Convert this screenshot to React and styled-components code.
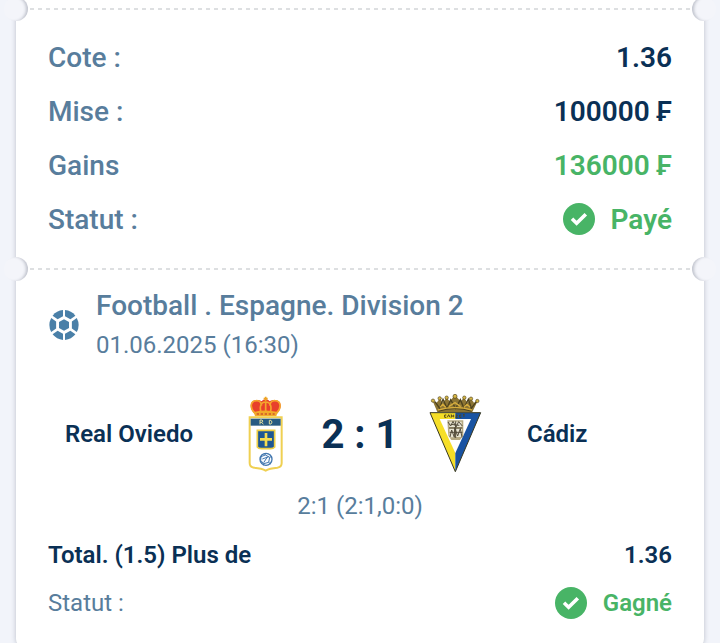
import styled, { createGlobalStyle } from 'styled-components';
import React from 'react';

const GlobalStyle = createGlobalStyle`
  * {
    box-sizing: border-box;
  }

  body {
    margin: 0;
    background: #f2f4fa;
    font-family: Roboto, 'Liberation Sans', sans-serif;
    color: #0a3055;
    overflow-x: hidden;
  }
`;

const Page = styled.main`
  padding: 0 16px;
`;

const Ticket = styled.article`
  background: white;
  border-radius: 0 0 8px 8px;
  box-shadow: 0 0 5px rgba(60, 70, 90, 0.3);
`;

const Tear = styled.div`
  position: relative;
  display: flex;
  align-items: center;
  height: 18px;
  padding: 0 14px;
`;

const Dashes = styled.svg`
  width: 100%;
  height: 2px;
`;

// half circles cut out of both edges of the ticket
const Notch = styled.span`
  position: absolute;
  top: -3px;
  ${({ side }) => side}: -12px;
  width: 24px;
  height: 24px;
  border-radius: 50%;
  background: #f4f5fa;
  box-shadow: inset ${({ side }) => (side === 'left' ? '-3px' : '3px')} 0 3px -1px rgba(60, 70, 90, 0.28);
`;

const Summary = styled.dl`
  margin: 0;
  padding: 12px 32px 14px;
`;

const Row = styled.div`
  display: flex;
  align-items: center;
  justify-content: space-between;
  height: ${({ small }) => (small ? '48px' : '54px')};
  font-size: ${({ small }) => (small ? '24px' : '28px')};
`;

const Label = styled.dt`
  color: ${({ dark }) => (dark ? '#0a3055' : '#587d9c')};
  font-weight: ${({ weight }) => weight || 500};
`;

const Value = styled.dd`
  display: flex;
  align-items: center;
  gap: 16px;
  margin: 0;
  font-weight: 600;
  color: ${({ green }) => (green ? '#48b466' : '#0a3055')};
`;

const Event = styled.section`
  padding: 8px 32px 20px;
`;

const League = styled.header`
  display: flex;
  align-items: center;
  gap: 16px;
  color: #587d9c;
`;

const LeagueName = styled.h2`
  margin: 0;
  font-size: 28px;
  line-height: 40px;
  font-weight: 500;
`;

const Kickoff = styled.time`
  display: block;
  font-size: 24px;
  line-height: 38px;
`;

const Match = styled.div`
  display: grid;
  grid-template-columns: 1fr 80px 110px 80px 1fr;
  align-items: center;
  justify-items: center;
  margin-top: 30px;
`;

const Team = styled.span`
  justify-self: ${({ away }) => (away ? 'start' : 'end')};
  padding: ${({ away }) => (away ? '0 0 0 32px' : '0 32px 0 0')};
  font-size: 24px;
  font-weight: 600;
  white-space: nowrap;
`;

const Score = styled.strong`
  font-size: 40px;
  font-weight: 700;
`;

const Periods = styled.p`
  margin: 12px 0 5px;
  font-size: 24px;
  line-height: 40px;
  text-align: center;
  color: #587d9c;
`;

const Bet = styled.dl`
  margin: 0;
`;

function Check() {
  return (
    <svg width="32" height="32" viewBox="0 0 32 32" aria-hidden="true">
      <circle cx="16" cy="16" r="16" fill="#48b466" />
      <path d="M9 15.8l4.6 4.4 9.2-9" fill="none" stroke="white" strokeWidth="3.6" />
    </svg>
  );
}

function BallIcon() {
  return (
    <svg width="32" height="32" viewBox="0 0 32 32" fill="#4a80a8" aria-hidden="true">
      <path d="M16 10.2l5 2.9v5.8l-5 2.9-5-2.9v-5.8z" />
      <path d="M15 1.1v6.2l-5.4 3-5-3.6A15 15 0 0 1 15 1.1z" />
      <path d="M17 1.1v6.2l5.4 3 5-3.6A15 15 0 0 0 17 1.1z" />
      <path d="M15 30.9v-6.2l-5.4-3-5 3.6A15 15 0 0 0 15 30.9z" />
      <path d="M17 30.9v-6.2l5.4-3 5 3.6A15 15 0 0 1 17 30.9z" />
      <path d="M3.2 9l4.9 3.5v7L3.2 23a15 15 0 0 1 0-14z" />
      <path d="M28.8 9l-4.9 3.5v7l4.9 3.5a15 15 0 0 0 0-14z" />
    </svg>
  );
}

function OviedoCrest() {
  return (
    <svg width="60" height="80" viewBox="2 22 180 240" role="img" aria-label="Real Oviedo">
      {/* crown */}
      <path d="M62 82C44 66 44 42 66 40c8-1 12 1 16 4 5-8 19-8 24 0 4-3 8-5 16-4 22 2 22 26 4 42z" fill="#e8402c" />
      <path d="M62 80c-16-15-15-37 4-38 10-1 15 8 16 15M126 80c16-15 15-37-4-38-10-1-15 8-16 15M80 77c-4-14-3-31 14-31s18 17 14 31M94 46v30" fill="none" stroke="#f4a52c" strokeWidth="5" />
      <path d="M94 30v13M88 36h12" stroke="#eda421" strokeWidth="5" />
      <path d="M58 76q36-9 72 0l-4 13H62z" fill="#f2ab29" />
      <path d="M67 82h54" stroke="#cf572a" strokeWidth="4" strokeDasharray="7 5" />
      {/* shield */}
      <path d="M46 92h96v137c0 9-4 13-13 14-14 1-26 3-35 9-9-6-21-8-35-9-9-1-13-5-13-14z" fill="white" stroke="#efd052" strokeWidth="6" />
      <path d="M49 96h90v21H49z" fill="#285b82" />
      <path d="M77 113v-13h6q5 3 0 7h-6m5 0l5 6M105 101h5q6 5 0 11h-5z" fill="none" stroke="#dfdc9f" strokeWidth="3" />
      <path d="M69 131h52v50q-4 5-12 5H81q-9 0-12-5z" fill="#1e5793" stroke="#edce45" strokeWidth="5" />
      <path d="M95 139v40M77 158h36" stroke="#f5dc50" strokeWidth="8" />
      <circle cx="95" cy="218" r="18" fill="#f8fbff" stroke="#4277ae" strokeWidth="4" />
      <path d="M80 210l13-5 13 7-3 15-15 4-9-10zM93 205l-3-6M106 212l7-3M103 227l6 5M88 231l-1 5M84 217l19-7M88 228l11-17" fill="none" stroke="#4277ae" strokeWidth="3" />
    </svg>
  );
}

function CadizCrest() {
  return (
    <svg width="60" height="80" viewBox="15 22 180 240" role="img" aria-label="Cádiz">
      {/* crown */}
      <path d="M52 76L38 43l12 5 10-13 8 13 12-15 9 11 16-18 17 18 10-11 11 15 9-13 10 13 11-5-16 33z" fill="#8c7534" />
      <path d="M45 45l14 20 10-27 12 27 11-26 15 27 14-27 11 26 13-27 9 27 15-20M55 73q50-16 100 0" fill="none" stroke="#4d421d" strokeWidth="4" />
      <path d="M54 70q52-15 102 0M60 62l8-9 9 9M86 60l19-12 17 12M132 62l9-9 9 9" fill="none" stroke="#d6ad3d" strokeWidth="4" />
      <g fill="#d8b743" stroke="#51451f" strokeWidth="2">
        <circle cx="39" cy="42" r="5" /><circle cx="59" cy="35" r="5" />
        <circle cx="80" cy="33" r="5" /><circle cx="105" cy="29" r="6" />
        <circle cx="133" cy="33" r="5" /><circle cx="153" cy="36" r="5" />
        <circle cx="172" cy="43" r="5" />
      </g>
      {/* pennant */}
      <path d="M30 78h76v177z" fill="#f6df28" />
      <path d="M182 78h-76v177z" fill="#1953a2" />
      <path d="M59 97h94l-47 102z" fill="white" />
      <path d="M82 101h48v46l-10 13h-26l-9-13z" fill="#b6aa83" />
      <path d="M88 105h37v16H88zM88 126h17v26H89zM108 126h18v25h-18z" fill="#e8e4d2" />
      <path d="M84 106l8 12 7-14 9 17 8-16 11 13M87 124h40M90 151l5-21 8 22 1-29 9 25 8-22 5 26M89 137h38M92 113l26 3M107 104v50" fill="none" stroke="#534c3b" strokeWidth="3" />
      <path d="M79 85h-5v7h5M82 92l4-8 4 8M94 84v8q7-3 0-8M101 84v8M107 85h5l-5 7h6M124 85h-5v7h5M129 84h5M129 88h5" fill="none" stroke="#51451b" strokeWidth="3" />
      <path d="M30 78h152l-76 177z" fill="none" stroke="#383820" strokeWidth="3" />
    </svg>
  );
}

function TearLine() {
  return (
    <Tear>
      <Notch side="left" />
      <Dashes aria-hidden="true">
        <line x1="0" y1="1" x2="100%" y2="1" stroke="#dddfe1" strokeWidth="2" strokeDasharray="4 4" />
      </Dashes>
      <Notch side="right" />
    </Tear>
  );
}

function App() {
  return (
    <Page>
      <GlobalStyle />
      <Ticket>
        <TearLine />

        <Summary>
          <Row>
            <Label>Cote :</Label>
            <Value>1.36</Value>
          </Row>
          <Row>
            <Label>Mise :</Label>
            <Value>100000 ₣</Value>
          </Row>
          <Row>
            <Label>Gains</Label>
            <Value green>136000 ₣</Value>
          </Row>
          <Row>
            <Label>Statut :</Label>
            <Value green><Check />Payé</Value>
          </Row>
        </Summary>

        <TearLine />

        <Event>
          <League>
            <BallIcon />
            <div>
              <LeagueName>Football . Espagne. Division 2</LeagueName>
              <Kickoff dateTime="2025-06-01T16:30">01.06.2025 (16:30)</Kickoff>
            </div>
          </League>

          <Match>
            <Team>Real Oviedo</Team>
            <OviedoCrest />
            <Score>2 : 1</Score>
            <CadizCrest />
            <Team away>Cádiz</Team>
          </Match>
          <Periods>2:1 (2:1,0:0)</Periods>

          <Bet>
            <Row small>
              <Label dark weight={600}>Total. (1.5) Plus de</Label>
              <Value>1.36</Value>
            </Row>
            <Row small>
              <Label weight={400}>Statut :</Label>
              <Value green><Check />Gagné</Value>
            </Row>
          </Bet>
        </Event>
      </Ticket>
    </Page>
  );
}

export default App;
